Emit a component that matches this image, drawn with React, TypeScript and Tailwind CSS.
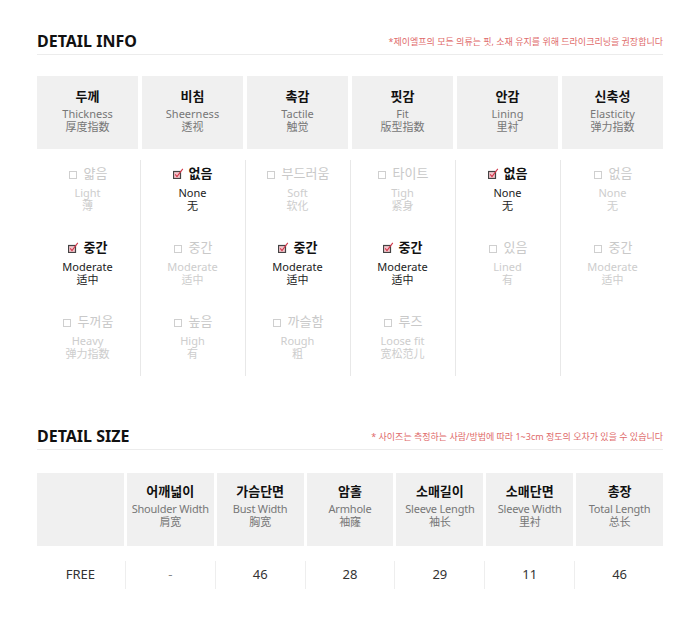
import React from "react";

const FONT = { fontFamily: '"Noto Sans", "Noto Sans CJK KR", "Noto Sans CJK SC", sans-serif' };

type Opt = { ko: string; en: string; zh: string; on?: boolean };
type Col = { ko: string; en: string; zh: string; opts: Opt[] };

const info: Col[] = [
  { ko: "두께", en: "Thickness", zh: "厚度指数", opts: [
    { ko: "얇음", en: "Light", zh: "薄" },
    { ko: "중간", en: "Moderate", zh: "适中", on: true },
    { ko: "두꺼움", en: "Heavy", zh: "弹力指数" },
  ] },
  { ko: "비침", en: "Sheerness", zh: "透视", opts: [
    { ko: "없음", en: "None", zh: "无", on: true },
    { ko: "중간", en: "Moderate", zh: "适中" },
    { ko: "높음", en: "High", zh: "有" },
  ] },
  { ko: "촉감", en: "Tactile", zh: "触觉", opts: [
    { ko: "부드러움", en: "Soft", zh: "软化" },
    { ko: "중간", en: "Moderate", zh: "适中", on: true },
    { ko: "까슬함", en: "Rough", zh: "粗" },
  ] },
  { ko: "핏감", en: "Fit", zh: "版型指数", opts: [
    { ko: "타이트", en: "Tigh", zh: "紧身" },
    { ko: "중간", en: "Moderate", zh: "适中", on: true },
    { ko: "루즈", en: "Loose fit", zh: "宽松范儿" },
  ] },
  { ko: "안감", en: "Lining", zh: "里衬", opts: [
    { ko: "없음", en: "None", zh: "无", on: true },
    { ko: "있음", en: "Lined", zh: "有" },
  ] },
  { ko: "신축성", en: "Elasticity", zh: "弹力指数", opts: [
    { ko: "없음", en: "None", zh: "无" },
    { ko: "중간", en: "Moderate", zh: "适中" },
  ] },
];

const size = [
  { ko: "", en: "", zh: "", v: "FREE" },
  { ko: "어깨넓이", en: "Shoulder Width", zh: "肩宽", v: "-" },
  { ko: "가슴단면", en: "Bust Width", zh: "胸宽", v: "46" },
  { ko: "암홀", en: "Armhole", zh: "袖窿", v: "28" },
  { ko: "소매길이", en: "Sleeve Length", zh: "袖长", v: "29" },
  { ko: "소매단면", en: "Sleeve Width", zh: "里衬", v: "11" },
  { ko: "총장", en: "Total Length", zh: "总长", v: "46" },
];

function Box({ on }: { on?: boolean }) {
  if (on) {
    return (
      <svg width="11" height="11" viewBox="0 0 11 11" className="mr-[5px] shrink-0">
        <rect x="0.5" y="3.5" width="7" height="7" fill="#f3c6cc" stroke="#444" strokeWidth="1.2" />
        <path d="M2.2 6.3 L4 8.6 L9.8 0.8" fill="none" stroke="#d2374a" strokeWidth="1.1" />
      </svg>
    );
  }
  return (
    <svg width="11" height="11" viewBox="0 0 11 11" className="mr-[5px] shrink-0">
      <rect x="1.5" y="3.5" width="7" height="7" fill="none" stroke="#cfcfcf" strokeWidth="1" />
    </svg>
  );
}

function Header({ title, note }: { title: string; note: string }) {
  return (
    <div className="flex items-end justify-between border-b border-[#ececec] pb-[3px]">
      <div className="text-[16px] font-bold leading-[20px] text-[#111]">{title}</div>
      <div className="text-[9px] leading-[14px] text-[#e06a6a] pb-[2px]">{note}</div>
    </div>
  );
}

export default function App() {
  return (
    <div className="w-[700px] h-[625px] bg-white" style={FONT}>
      <div className="px-[37px] pt-[31px]">
        <Header title="DETAIL INFO" note="*제이엘프의 모든 의류는 핏, 소재 유지를 위해 드라이크리닝을 권장합니다" />
        <div className="mt-[21px] flex gap-[4px]">
          {info.map((c) => (
            <div key={c.ko} className="flex-1 h-[73px] bg-[#f0f0f0] flex flex-col items-center pt-[10px]">
              <div className="text-[13px] font-bold leading-[20px] text-[#111]">{c.ko}</div>
              <div className="mt-px text-center text-[11px] leading-[13px] text-[#777]">
                {c.en}
                <br />
                {c.zh}
              </div>
            </div>
          ))}
        </div>
        <div className="mt-[11px] flex">
          {info.map((c, i) => (
            <React.Fragment key={c.ko}>
              {i > 0 && (
                <div className="w-[4px] flex justify-center">
                  <div className="w-px h-[216px] bg-[#e8e8e8]" />
                </div>
              )}
              <div className="flex-1 flex flex-col pt-[3px]">
                {c.opts.map((o, j) => (
                  <div key={j} className="h-[74px] flex flex-col items-center">
                    <div className={`flex items-center h-[20px] text-[13px] leading-[20px] ${o.on ? "font-bold text-[#111]" : "text-[#c9c9c9]"}`}>
                      <Box on={o.on} />
                      <span>{o.ko}</span>
                    </div>
                    <div className={`mt-[3px] text-center text-[11px] leading-[13px] ${o.on ? "text-[#222]" : "text-[#cdcdcd]"}`}>
                      {o.en}
                      <br />
                      {o.zh}
                    </div>
                  </div>
                ))}
              </div>
            </React.Fragment>
          ))}
        </div>

        <div className="mt-[41px]">
          <Header title="DETAIL SIZE" note="* 사이즈는 측정하는 사람/방법에 따라 1~3cm 정도의 오차가 있을 수 있습니다" />
        </div>
        <div className="mt-[23px] flex gap-[3px]">
          {size.map((c, i) => (
            <div key={i} className="flex-1 h-[73px] bg-[#f0f0f0] flex flex-col items-center pt-[8px]">
              {c.ko && (
                <>
                  <div className="text-[13px] font-bold leading-[20px] text-[#111]">{c.ko}</div>
                  <div className="mt-px text-center text-[11px] leading-[13px] text-[#777] tracking-[-0.2px]">
                    {c.en}
                    <br />
                    {c.zh}
                  </div>
                </>
              )}
            </div>
          ))}
        </div>
        <div className="mt-[15px] flex">
          {size.map((c, i) => (
            <React.Fragment key={i}>
              {i > 0 && (
                <div className="w-[3px] flex justify-center">
                  <div className="w-px h-[28px] bg-[#eeeeee]" />
                </div>
              )}
              <div className={`flex-1 h-[28px] flex items-center justify-center text-[13px] ${c.v === "-" ? "text-[#888]" : "text-[#333]"}`}>
                {c.v}
              </div>
            </React.Fragment>
          ))}
        </div>
      </div>
    </div>
  );
}
